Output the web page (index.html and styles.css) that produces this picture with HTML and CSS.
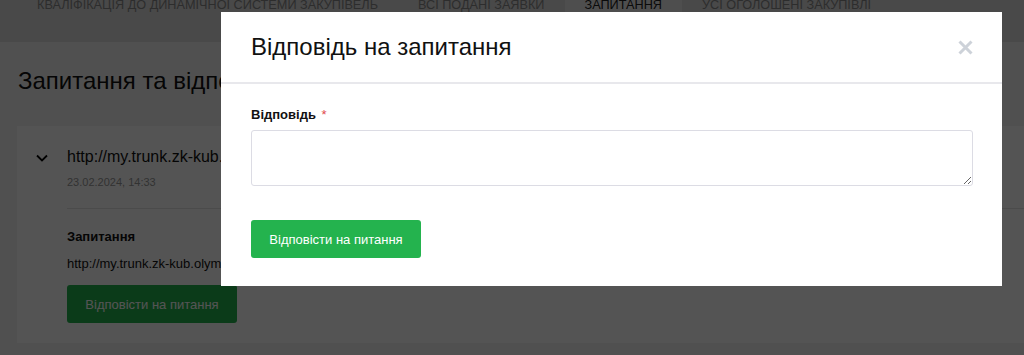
FILE: index.html
```html
<!DOCTYPE html>
<html lang="uk">
<head>
    <meta charset="UTF-8">
    <meta name="viewport" content="width=device-width, initial-scale=1.0">
    <title>Запитання та відповіді</title>
    <link rel="stylesheet" href="styles.css">
</head>
<body>
    <!-- Tabs -->
    <nav class="tabs">
        <a class="tab">Кваліфікація до динамічної системи закупівель</a>
        <a class="tab">Всі подані заявки</a>
        <a class="tab active">Запитання</a>
        <a class="tab">Усі оголошені закупівлі</a>
    </nav>

    <main class="content">
        <h1 class="page-title">Запитання та відповіді</h1>

        <div class="question-card">
            <div class="question-head">
                <svg class="chevron" width="12" height="8" viewBox="0 0 12 8">
                    <path d="M1 1.5 L6 6.5 L11 1.5" fill="none" stroke="#000" stroke-width="1.8"/>
                </svg>
                <div>
                    <div class="question-link">http://my.trunk.zk-kub.olympic.com.ua/questions/answer/12345</div>
                    <div class="question-date">23.02.2024, 14:33</div>
                </div>
            </div>
            <div class="question-body">
                <div class="question-label">Запитання</div>
                <div class="question-text">http://my.trunk.zk-kub.olympic.com.ua/questions/answer/12345</div>
                <button class="btn-green">Відповісти на питання</button>
            </div>
        </div>
    </main>

    <!-- Modal -->
    <div class="overlay"></div>
    <div class="modal">
        <div class="modal-header">
            <h2>Відповідь на запитання</h2>
            <span class="modal-close">
                <svg width="15" height="15" viewBox="0 0 15 15">
                    <path d="M1.5 1.5 L13.5 13.5 M13.5 1.5 L1.5 13.5" stroke="#cdd2d9" stroke-width="3"/>
                </svg>
            </span>
        </div>
        <div class="modal-body">
            <label class="field-label">Відповідь <span class="required">*</span></label>
            <textarea class="field-input"></textarea>
            <button class="btn-green">Відповісти на питання</button>
        </div>
    </div>
</body>
</html>
```

FILE: styles.css
```css
body {
    margin: 0;
    background-color: #f3f3f3;
    font-family: "Liberation Sans", Arial, sans-serif;
    color: #111;
    overflow: hidden;
}

.tabs {
    display: flex;
    margin-top: -7px;
    height: 49px;
    padding-left: 17px;
    background-color: #dcdcdc;
}
.tab {
    padding: 4px 20px 0;
    font-size: 12.7px;
    line-height: 16px;
    text-transform: uppercase;
    color: #8a8a8a;
    white-space: nowrap;
}
.tab.active {
    background-color: #ececec;
    color: #222;
}

.content {
    padding: 0 0 0 17px;
}
.page-title {
    margin: 22px 0 28px 1px;
    font-size: 24px;
    font-weight: normal;
    line-height: 34px;
}

.question-card {
    background-color: #fff;
    padding-bottom: 20px;
}
.question-head {
    display: flex;
    align-items: flex-start;
    padding: 22px 0 0 19px;
}
.chevron {
    margin: 6px 19px 0 0;
    flex: none;
}
.question-link {
    font-size: 16px;
    line-height: 18px;
    white-space: nowrap;
}
.question-date {
    margin-top: 10px;
    font-size: 11px;
    color: #999;
}
.question-body {
    margin: 20px 0 0 50px;
    padding-top: 20px;
    border-top: 1px solid #e3e3e3;
}
.question-label {
    font-size: 13px;
    font-weight: bold;
}
.question-text {
    margin-top: 12px;
    font-size: 13px;
    white-space: nowrap;
}
.question-body .btn-green {
    margin-top: 14px;
}

.btn-green {
    display: block;
    width: 170px;
    height: 38px;
    border: none;
    border-radius: 3px;
    background-color: #24b34e;
    color: #fff;
    font-family: inherit;
    font-size: 13px;
    cursor: pointer;
}

.overlay {
    position: fixed;
    inset: 0;
    background-color: rgba(0, 0, 0, 0.67);
}
.modal {
    position: absolute;
    top: 12px;
    left: 221px;
    width: 781px;
    background-color: #fff;
}
.modal-header {
    display: flex;
    justify-content: space-between;
    align-items: center;
    height: 70px;
    padding: 0 29px 0 30px;
    border-bottom: 2px solid #e8e8ec;
}
.modal-header h2 {
    margin: 0;
    font-size: 24px;
    font-weight: normal;
    color: #111;
}
.modal-close {
    display: flex;
    cursor: pointer;
}
.modal-body {
    padding: 23px 29px 28px 30px;
}
.field-label {
    display: block;
    font-size: 13px;
    font-weight: bold;
    line-height: 16px;
}
.required {
    color: #e0474c;
    font-weight: normal;
    margin-left: 2px;
}
.field-input {
    display: block;
    box-sizing: border-box;
    width: 100%;
    height: 56px;
    margin: 7px 0 34px;
    border: 1px solid #dcdce4;
    border-radius: 3px;
    font-family: inherit;
}
```
